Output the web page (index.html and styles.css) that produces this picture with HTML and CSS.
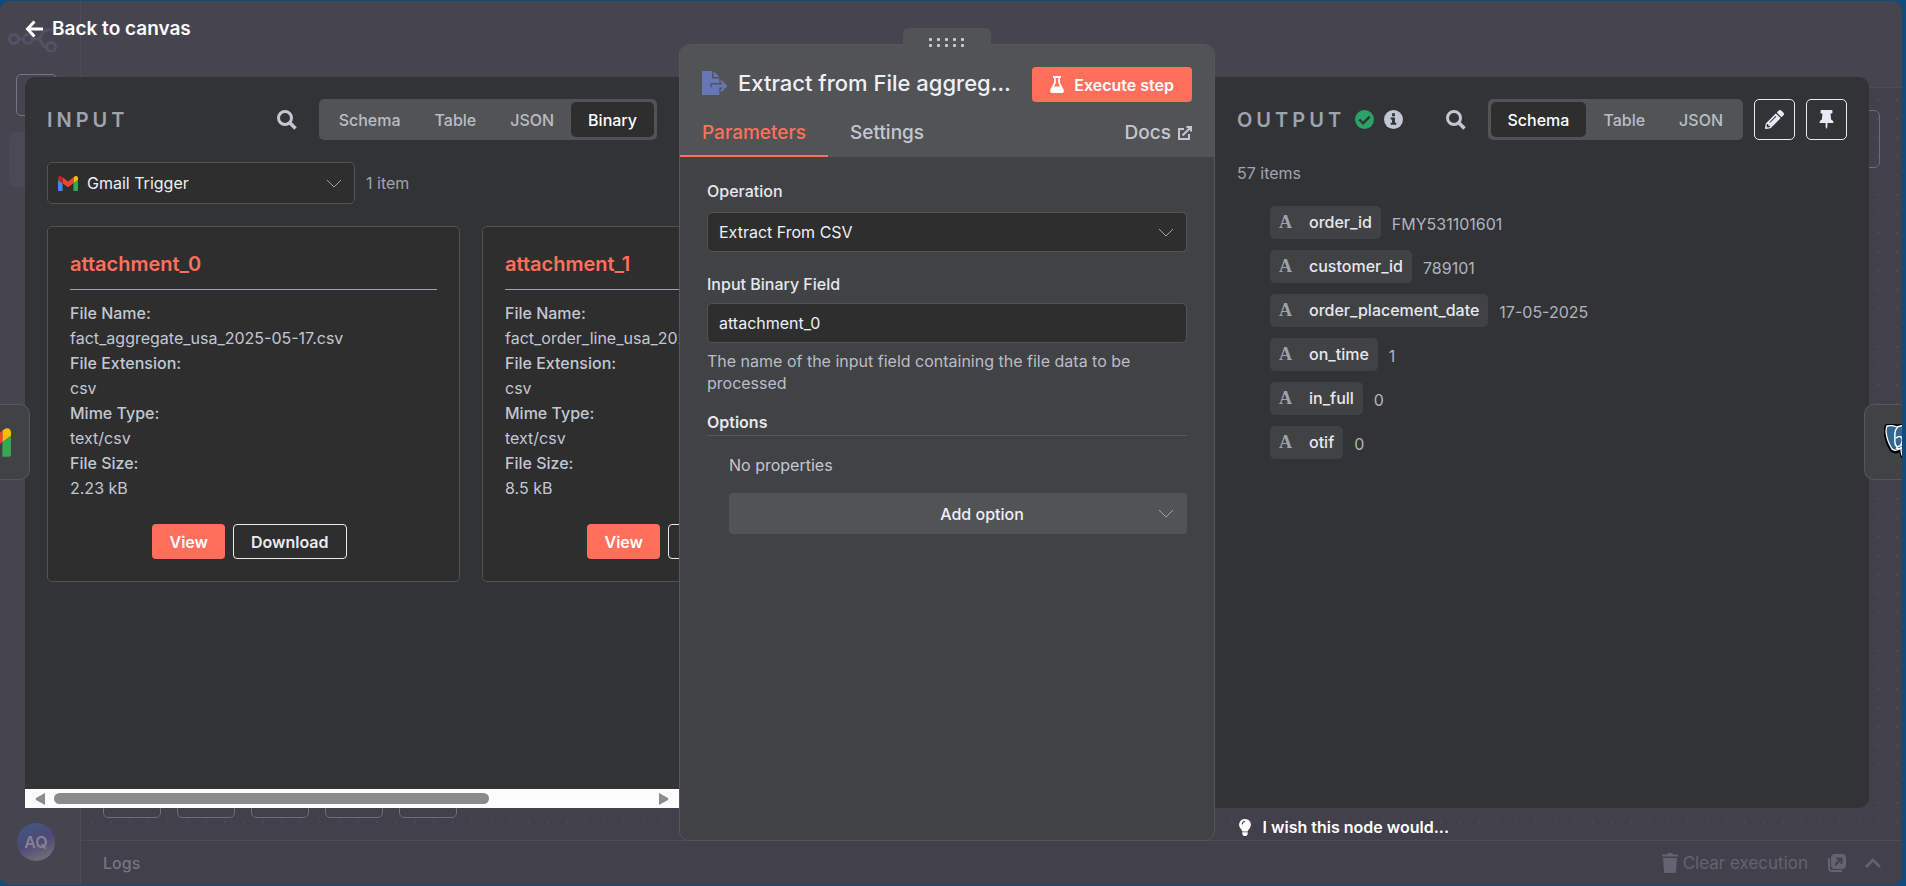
FILE: index.html
```
<!DOCTYPE html>
<html lang="en">
<head>
<meta charset="utf-8">
<title>Extract from File</title>
<link rel="stylesheet" href="styles.css">
</head>
<body>
<div class="app">
  <div class="backdrop" aria-hidden="true">
    <div class="rail">
      <svg class="rail-logo" viewBox="0 0 50 28" fill="none" stroke="currentColor" stroke-width="3"><circle cx="6" cy="15" r="4.500"/><circle cx="20" cy="15" r="4.500"/><circle cx="43" cy="23" r="4.500"/><path d="M10.500 15H15.500M24.500 15H30Q33 14 34 10Q35 6 40 6H44M30 15Q33 16 34 19Q35 23 38.500 23"/></svg>
      <div class="rail-box"></div>
      <div class="rail-item"></div>
      <div class="avatar">AQ</div>
    </div>
    <div class="canvas">
      <div class="topbar"></div>
      <div class="dots"><div class="canvas-node"></div>
        <div class="zooms"><i></i><i></i><i></i><i></i><i></i></div>
      </div>
      <div class="logs">
        <span class="logs-title">Logs</span>
        <svg class="i-trash" viewBox="0 0 16 20"><path fill="currentColor" d="M0 1.500H5L6 0H10L11 1.500H16V3.500H0ZM1 5H15L14 18.500Q14 20 12.500 20H3.500Q2 20 2 18.500Z"/></svg>
        <span class="clear">Clear execution</span>
        <svg class="i-pop" viewBox="0 0 18 18" fill="none" stroke="currentColor" stroke-width="2"><rect x="4" y="1" width="13" height="13" rx="3" fill="currentColor"/><path d="M1 4V14Q1 17 4 17H14"/><path stroke="#42404a" d="M7 11L13 5M8 4.500H13.500V10"/></svg>
        <svg class="i-up" viewBox="0 0 18 12" fill="none" stroke="currentColor" stroke-width="2.500"><path d="M2 10L9 3L16 10"/></svg>
      </div>
    </div>
  </div>

  <button class="back"><svg viewBox="0 0 18 18" fill="none" stroke="currentColor" stroke-width="3"><path d="M9.500 1.500L2.500 9L9.500 16.500M2.500 9H18"/></svg>Back to canvas</button>

  <main class="ndv">
    <section class="panel input">
      <header class="panel-head">
        <h2>INPUT</h2>
        <button class="search" aria-label="Search input"><svg viewBox="0 0 20 20" fill="none" stroke="currentColor"><circle cx="8" cy="8" r="6.500" stroke-width="3"/><path stroke-width="3.500" d="M12.500 12.500L18.500 18.500"/></svg></button>
        <div class="seg"><button>Schema</button><button>Table</button><button>JSON</button><button class="on">Binary</button></div>
      </header>
      <div class="source">
        <button class="source-select"><svg class="gmail" viewBox="52 42 88 66"><path fill="#4285f4" d="M58 108h14V74L52 59v43c0 3.320 2.690 6 6 6"/><path fill="#34a853" d="M120 108h14c3.320 0 6-2.690 6-6V59l-20 15"/><path fill="#fbbc04" d="M120 48v26l20-15v-8c0-7.420-8.470-11.650-14.400-7.200"/><path fill="#ea4335" d="M72 74V48l24 18 24-18v26L96 92"/><path fill="#c5221f" d="M52 51v8l20 15V48l-5.600-4.200c-5.940-4.450-14.400-.220-14.400 7.200"/></svg><span>Gmail Trigger</span><svg class="chev" viewBox="0 0 16 9" fill="none" stroke="currentColor"><path d="M1 1L8 8L15 1"/></svg></button>
        <span class="count">1 item</span>
      </div>
      <div class="cards">
        <article class="card">
          <h3>attachment_0</h3>
          <dl><dt>File Name:</dt><dd>fact_aggregate_usa_2025-05-17.csv</dd><dt>File Extension:</dt><dd>csv</dd><dt>Mime Type:</dt><dd>text/csv</dd><dt>File Size:</dt><dd>2.23 kB</dd></dl>
          <div class="actions"><button class="primary">View</button><button class="outline">Download</button></div>
        </article>
        <article class="card">
          <h3>attachment_1</h3>
          <dl><dt>File Name:</dt><dd>fact_order_line_usa_2025-05-17.csv</dd><dt>File Extension:</dt><dd>csv</dd><dt>Mime Type:</dt><dd>text/csv</dd><dt>File Size:</dt><dd>8.5 kB</dd></dl>
          <div class="actions"><button class="primary">View</button><button class="outline">Download</button></div>
        </article>
      </div>
      <div class="hscroll" aria-hidden="true"><svg viewBox="0 0 10 12"><path fill="currentColor" d="M10 0V12L1 7Q0 6 1 5Z"/></svg><div class="track"><div class="thumb"></div></div><svg viewBox="0 0 10 12"><path fill="currentColor" d="M0 0V12L9 7Q10 6 9 5Z"/></svg></div>
    </section>

    <section class="node">
      <div class="grip"><i></i><i></i><i></i><i></i><i></i><i></i><i></i><i></i><i></i><i></i></div>
      <header class="node-head">
        <div class="title-row">
          <svg class="i-file" viewBox="0 0 576 512" preserveAspectRatio="none"><path fill="currentColor" d="M0 0H224V160H384V256H208Q184 256 184 280V328Q184 352 208 352H384V512H0ZM256 0L384 128H256ZM216 288H464L400 224L434 190L556 312Q564 320 556 328L434 450L400 416L464 352H216Z"/></svg>
          <h1>Extract from File aggregate data</h1>
          <button class="primary execute"><svg viewBox="0 0 14 17"><path fill="currentColor" d="M3 0H11V2H10V6.500L13.800 14Q14.500 17 12 17H2Q-.500 17 .200 14L4 6.500V2H3ZM5.800 2V7L4 10.500H10L8.200 7V2Z"/></svg>Execute step</button>
        </div>
        <nav class="tabs"><button class="on">Parameters</button><button>Settings</button><a href="#docs">Docs<svg viewBox="0 0 14 14" fill="none" stroke="currentColor" stroke-width="2"><path d="M6 3H1V13H11V8M4.500 9.500L12.500 1.500M8.500 1H13V5.500"/></svg></a></nav>
      </header>
      <div class="form">
        <label for="op">Operation</label>
        <div class="select-wrap"><select id="op"><option>Extract From CSV</option></select><svg class="chev" viewBox="0 0 16 9" fill="none" stroke="currentColor"><path d="M1 1L8 8L15 1"/></svg></div>
        <label class="second" for="bin">Input Binary Field</label>
        <input id="bin" type="text" value="attachment_0">
        <p class="hint">The name of the input field containing the file data to be processed</p>
        <h4>Options</h4>
        <div class="opts">
          <p>No properties</p>
          <button class="add"><span>Add option</span><svg class="chev" viewBox="0 0 16 9" fill="none" stroke="currentColor"><path d="M1 1L8 8L15 1"/></svg></button>
        </div>
      </div>
    </section>

    <section class="panel output">
      <header class="panel-head">
        <h2>OUTPUT</h2>
        <svg class="badge ok" viewBox="0 0 20 20"><circle cx="10" cy="10" r="10" fill="currentColor"/><path d="M4.500 10L8.500 14L15.500 7" fill="none" stroke="#323335" stroke-width="2.500"/></svg>
        <svg class="badge info" viewBox="0 0 20 20"><circle cx="10" cy="10" r="10" fill="currentColor"/><path fill="#323335" d="M8.500 3.500H11.500V6.500H8.500ZM7 8H11.500V13.500H13V15.500H7V13.500H8.500V10H7Z"/></svg>
        <button class="search" aria-label="Search output"><svg viewBox="0 0 20 20" fill="none" stroke="currentColor"><circle cx="8" cy="8" r="6.500" stroke-width="3"/><path stroke-width="3.500" d="M12.500 12.500L18.500 18.500"/></svg></button>
        <div class="seg"><button class="on">Schema</button><button>Table</button><button>JSON</button></div>
        <button class="square" aria-label="Edit output"><svg viewBox="0 0 512 512"><path fill="currentColor" fill-rule="evenodd" d="M498 142l-46 46c-5 5-12 5-17 0L324 77c-5-5-5-12 0-17l46-46c19-19 49-19 68 0l60 60c19 19 19 49 0 68zM284 100L22 362 0 484c-3 17 12 31 28 28l122-21 262-262c5-5 5-12 0-17L301 100c-5-5-12-5-17 0zM124 340c-6-6-6-14 0-20l154-154c6-6 14-6 20 0s6 14 0 20L144 340c-6 5-14 5-20 0zM88 424h48v36l-64 12-32-32 12-64h36z"/></svg></button>
        <button class="square" aria-label="Pin data"><svg viewBox="0 0 384 512"><path fill="currentColor" d="M298 28l3 68 15 160q60 25 66 80 0 16-16 16H216v104l-24 56-24-56V352H18Q2 352 2 336q6-55 66-80L83 96H56q-24 0-24-24V24Q32 0 56 0H328q24 0 24 24V72q0 24-24 24H301z"/></svg></button>
      </header>
      <p class="items">57 items</p>
      <ul class="schema">
        <li><span class="pill"><b>A</b>order_id</span><span class="val">FMY531101601</span></li>
        <li><span class="pill"><b>A</b>customer_id</span><span class="val">789101</span></li>
        <li><span class="pill"><b>A</b>order_placement_date</span><span class="val">17-05-2025</span></li>
        <li><span class="pill"><b>A</b>on_time</span><span class="val">1</span></li>
        <li><span class="pill"><b>A</b>in_full</span><span class="val">0</span></li>
        <li><span class="pill"><b>A</b>otif</span><span class="val">0</span></li>
      </ul>
    </section>
  </main>

  <a class="wish" href="#feedback"><svg viewBox="0 0 12 17"><path fill="currentColor" fill-rule="evenodd" d="M6 0A5.800 5.800 0 0 1 10.500 9.500Q9 11 8.700 12.500H3.300Q3 11 1.500 9.500A5.800 5.800 0 0 1 6 0ZM6 2Q2.800 2.200 2.600 5.500H3.600Q3.800 3.200 6 3ZM3.300 13.300H8.700V15L7.500 17H4.500L3.300 15Z"/></svg>I wish this node would...</a>

  <button class="side left" aria-label="Gmail Trigger"><svg viewBox="52 42 88 66"><path fill="#34a853" d="M120 108h14c3.320 0 6-2.690 6-6V59l-20 15"/><path fill="#fbbc04" d="M120 48v26l20-15v-8c0-7.420-8.470-11.650-14.400-7.200"/><path fill="#ea4335" d="M72 74V48l24 18 24-18v26L96 92"/></svg></button>
  <button class="side right" aria-label="Postgres"><svg viewBox="0 0 34 36"><path d="M3 1Q8 0 13 2Q18 0 24 1Q33 3 32 12Q31 20 26 25Q25 34 20 34Q17 33 17 26Q11 30 7 26Q2 18 1 8Q1 3 3 1Z" fill="#336791" stroke="#000" stroke-width="3"/><path d="M3 2Q8 1 13 3Q18 1 24 2Q32 4 31 12Q30 20 25 24Q24 33 20 33Q17 32 17 24Q11 28 8 25Q3 17 2 8Q2 4 3 2Z" fill="#336791" stroke="#fff" stroke-width="1.300"/><path d="M14 3Q10 6 11 14Q10 20 13 23L18 21M12 14Q16 11 18 14Q19 19 16 22M18 4Q23 9 19 17M12 24Q15 26 18 23" fill="none" stroke="#fff" stroke-width="1.500"/></svg></button>
</div>
</body>
</html>
```
FILE: styles.css
```
* { box-sizing: border-box; }
body { margin: 0; background: #0f4c7d; color: #c3c7d4; font: 16px/24px Inter, "Liberation Sans", sans-serif; }
h1, h2, h3, h4, p, dl, dd, ul { margin: 0; padding: 0; }
button, input, select { font: inherit; color: inherit; }
button { border: 0; padding: 0; background: none; cursor: pointer; }
svg { display: block; flex: none; }

.app { position: relative; height: 100vh; overflow: hidden; padding: 77px 37px 78px 25px; }

/* dimmed editor behind the dialog */
.backdrop { position: absolute; inset: 1px 4px 1px 0; display: flex; background: #42404a; border-radius: 10px; overflow: hidden; }
.rail { width: 81px; flex: none; background: #46454f; border-right: 1px solid #4d4b57; display: flex; flex-direction: column; }
.rail-logo { width: 50px; height: 28px; margin: 23px 0 0 8px; color: #57556a; opacity: .8; }
.rail-box { width: 41px; height: 42px; margin: 22px 0 0 16px; border: 1px solid #777584; border-radius: 5px; }
.rail-item { width: 64px; height: 55px; margin: 16px 0 0 9px; border-radius: 5px; background: #4b4955; }
.avatar { width: 38px; height: 38px; margin: auto 0 24px 17px; border-radius: 50%; background: linear-gradient(160deg, #405a80, #4d4878 50%, #6e6b78 85%); color: #85838f; font-size: 16px; font-weight: 600; line-height: 38px; text-align: center; }
.canvas { flex: 1; display: flex; flex-direction: column; }
.topbar { height: 87px; background: #46454f; border-bottom: 1px solid #4d4b57; }
.dots { position: relative; flex: 1; background: radial-gradient(circle, #4e4c58 1px, transparent 1px) 1px 2px / 19px 19px; }
.canvas-node { position: absolute; top: 22px; right: 22px; width: 60px; height: 58px; border: 1px solid #6f6d7b; border-radius: 6px; }
.zooms { position: absolute; left: 22px; bottom: 22px; display: flex; gap: 16px; }
.zooms i { width: 58px; height: 42px; border: 1px solid #6f6d7b; border-radius: 5px; }
.logs { height: 45px; border-top: 1px solid #4d4b57; display: flex; align-items: center; padding: 0 20px 0 22px; color: #656371; }
.logs-title { flex: 1; color: #777582; font-weight: 500; }
.i-trash { width: 16px; height: 20px; }
.clear { margin: 0 20px 0 5px; font-size: 17px; }
.i-pop { width: 18px; height: 18px; }
.i-up { width: 18px; height: 12px; margin-left: 18px; }

.back { position: absolute; top: 17px; left: 25px; display: flex; align-items: center; gap: 9px; color: #fff; font-size: 19px; font-weight: 600; }
.back svg { width: 18px; height: 18px; }

.ndv { position: relative; display: grid; grid-template-columns: 654px 536px 1fr; height: 100%; }
.panel { min-width: 0; background: #323335; overflow: hidden; display: flex; flex-direction: column; }
.input { border-radius: 10px 0 0 0; }
.output { border-radius: 0 10px 10px 0; }
.panel-head { display: flex; align-items: center; padding: 22px 22px 0; }
.panel-head h2 { font-size: 20px; font-weight: 600; letter-spacing: 4px; color: #9ea3b0; }
.search { margin: 0 22px 0 auto; }
.search svg { width: 20px; height: 20px; }
.seg { display: flex; padding: 3px; background: #525355; border-radius: 5px; }
.seg button { height: 35px; padding: 0 17px; border-radius: 5px; font-weight: 500; color: #b9bdca; }
.seg .on { background: #2d2e2d; color: #fff; }
.square { display: grid; place-items: center; width: 41px; height: 41px; margin-left: 11px; border: 1px solid #e8eaf2; border-radius: 5px; color: #e8eaf5; }
.square svg { width: 19px; height: 19px; }
.badge { width: 19px; height: 19px; margin-left: 10px; }
.ok { color: #2ba366; }
.info { color: #c3c7d4; }

.source { display: flex; align-items: center; gap: 11px; padding: 22px; }
.source-select { display: flex; align-items: center; gap: 9px; width: 308px; height: 42px; padding: 0 12px 0 10px; background: #2d2e2d; border: 1px solid #525355; border-radius: 5px; color: #eef0f7; text-align: left; }
.source-select span { flex: 1; }
.gmail { width: 20px; height: 15px; }
.chev { width: 16px; height: 9px; color: #a0a3ad; }
.count, .items { color: #a0a4b0; }
.cards { flex: 1; display: flex; align-items: flex-start; gap: 22px; padding: 0 22px; overflow: hidden; }
.card { flex: 0 0 413px; background: #2d2e2d; border: 1px solid #525355; border-radius: 5px; padding: 22px; }
.card h3 { padding-bottom: 10px; margin-bottom: 11px; border-bottom: 1px solid #a0a3ad; color: #ff6f5c; font-size: 20px; font-weight: 600; line-height: 30px; }
.card dl { line-height: 25px; }
.card dt { font-weight: 500; }
.actions { display: flex; justify-content: center; gap: 8px; margin-top: 23px; padding-right: 8px; }
.primary, .outline { height: 35px; padding: 0 17px; border-radius: 4px; font-weight: 600; }
.primary { background: #ff6f5c; color: #fff; }
.outline { border: 1px solid #e8eaf2; color: #e8eaf5; }
.hscroll { display: flex; align-items: center; gap: 9px; height: 19px; padding: 0 10px; background: #fcfcfc; color: #8b8b8b; }
.hscroll svg { width: 10px; height: 12px; }
.track { flex: 1; }
.thumb { width: 73%; height: 11px; border-radius: 6px; background: currentColor; }

.node { position: relative; margin: -33px 0; background: #414244; border: 1px solid #56575a; border-radius: 10px; }
.grip { position: absolute; top: -17px; left: 50%; width: 88px; height: 20px; margin-left: -44px; padding: 10px 26px 0; display: grid; grid-template-columns: repeat(5, 3px); gap: 3px 5px; align-content: start; border-radius: 5px 5px 0 0; background: #525355; }
.grip i { height: 3px; border-radius: 1px; background: #c9ccd8; }
.node-head { background: #525355; border-radius: 9px 9px 0 0; padding: 22px 22px 0; }
.title-row { display: flex; align-items: center; }
.i-file { width: 26px; height: 24px; margin-bottom: 3px; color: #6577b7; }
.title-row h1 { flex: 1; min-width: 0; margin: 0 20px 3px 10px; overflow: hidden; white-space: nowrap; text-overflow: ellipsis; font-size: 22px; font-weight: 500; line-height: 30px; color: #eef0f7; }
.execute { display: flex; align-items: center; gap: 10px; padding: 0 18px; }
.execute svg { width: 14px; height: 17px; }
.tabs { display: flex; margin: 9px 0 0 -22px; font-size: 19px; font-weight: 500; }
.tabs button { height: 46px; padding: 0 22px 1px; border-bottom: 2px solid transparent; }
.tabs .on { color: #ff6f5c; border-color: #ff6f5c; }
.tabs a { display: flex; align-items: center; gap: 7px; height: 44px; margin-left: auto; color: inherit; text-decoration: none; }
.tabs svg { width: 14px; height: 14px; }
.form { padding: 22px 27px; }
.form label { display: block; font-weight: 500; color: #e6e8ef; }
.form input, .form select { display: block; width: 100%; height: 40px; padding: 0 11px; border: 1px solid #525355; border-radius: 5px; background: #2d2e2d; color: #eef0f7; appearance: none; }
.select-wrap { position: relative; margin-top: 9px; }
.select-wrap .chev { position: absolute; top: 16px; right: 13px; }
.form .second { margin-top: 20px; }
.form input { margin-top: 7px; }
.hint { margin-top: 7px; line-height: 22px; color: #b9bdca; }
.form h4 { margin-top: 15px; border-bottom: 1px solid #56575a; color: #e6e8ef; font-size: 16px; font-weight: 600; line-height: 26px; }
.opts { padding: 17px 0 0 22px; }
.add { display: flex; align-items: center; width: 100%; height: 41px; margin-top: 16px; padding: 0 13px; background: #525355; border-radius: 4px; color: #eef0f7; font-weight: 500; }
.add span { flex: 1; padding-left: 64px; }

.items { padding: 21px 22px 0; }
.schema { display: grid; gap: 11px; padding: 21px 55px; list-style: none; }
.schema li { display: flex; gap: 11px; height: 33px; }
.pill { display: flex; gap: 17px; height: 33px; padding: 0 9px; background: #414244; border-radius: 5px; color: #e6e8ef; font-weight: 500; line-height: 33px; }
.pill b { width: 13px; font: 700 18px/32px "Liberation Serif", serif; color: #9ea3b0; text-align: center; }
.val { line-height: 37px; color: #b0b4c0; }

.wish { position: absolute; right: 457px; bottom: 47px; display: flex; align-items: center; gap: 12px; color: #fff; font-weight: 600; text-decoration: none; }
.wish svg { width: 12px; height: 17px; }
.side { position: absolute; top: 404px; height: 76px; background: #414244; border: 1px solid #56575a; }
.left { left: 0; width: 30px; border-left: 0; border-radius: 0 10px 10px 0; overflow: hidden; }
.left svg { position: absolute; right: 18px; top: 23px; width: 38px; height: 29px; }
.right { right: 4px; width: 38px; border-right: 0; border-radius: 10px 0 0 10px; overflow: hidden; }
.right svg { position: absolute; left: 19px; top: 19px; width: 34px; height: 36px; }
```
